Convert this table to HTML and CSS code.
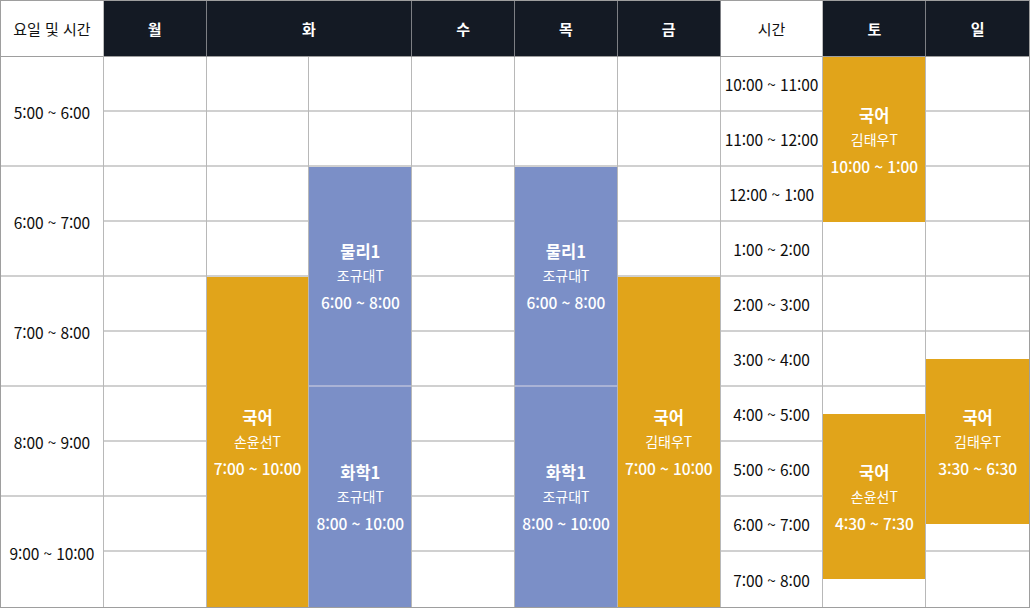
FILE: index.html
```html
<!DOCTYPE html>
<html lang="ko">
<head>
<meta charset="utf-8">
<title>시간표</title>
<link rel="stylesheet" href="styles.css">
</head>
<body>
<div class="tt">
  <div class="hd hd-light">요일 및 시간</div>
  <div class="hd">월</div>
  <div class="hd hd-wide">화</div>
  <div class="hd">수</div>
  <div class="hd">목</div>
  <div class="hd">금</div>
  <div class="hd hd-light">시간</div>
  <div class="hd">토</div>
  <div class="hd hd-last">일</div>

  <div class="col">
    <div class="slots">
      <div class="slot slot-tall">5:00 ~ 6:00</div>
      <div class="slot slot-tall">6:00 ~ 7:00</div>
      <div class="slot slot-tall">7:00 ~ 8:00</div>
      <div class="slot slot-tall">8:00 ~ 9:00</div>
      <div class="slot slot-tall">9:00 ~ 10:00</div>
    </div>
  </div>

  <div class="col">
    <div class="slots">
      <div class="slot"></div><div class="slot"></div><div class="slot"></div><div class="slot"></div><div class="slot"></div>
      <div class="slot"></div><div class="slot"></div><div class="slot"></div><div class="slot"></div><div class="slot"></div>
    </div>
  </div>

  <div class="col">
    <div class="slots">
      <div class="slot"></div><div class="slot"></div><div class="slot"></div><div class="slot"></div><div class="slot"></div>
      <div class="slot"></div><div class="slot"></div><div class="slot"></div><div class="slot"></div><div class="slot"></div>
    </div>
    <div class="events">
      <div class="ev ev-gold" style="grid-row: 9 / 21">
        <div class="ev-title">국어</div>
        <div class="ev-teacher">손윤선T</div>
        <div class="ev-time">7:00 ~ 10:00</div>
      </div>
    </div>
  </div>

  <div class="col">
    <div class="slots">
      <div class="slot"></div><div class="slot"></div><div class="slot"></div><div class="slot"></div><div class="slot"></div>
      <div class="slot"></div><div class="slot"></div><div class="slot"></div><div class="slot"></div><div class="slot"></div>
    </div>
    <div class="events">
      <div class="ev ev-blue ev-split" style="grid-row: 5 / 13">
        <div class="ev-title">물리1</div>
        <div class="ev-teacher">조규대T</div>
        <div class="ev-time">6:00 ~ 8:00</div>
      </div>
      <div class="ev ev-blue" style="grid-row: 13 / 21">
        <div class="ev-title">화학1</div>
        <div class="ev-teacher">조규대T</div>
        <div class="ev-time">8:00 ~ 10:00</div>
      </div>
    </div>
  </div>

  <div class="col">
    <div class="slots">
      <div class="slot"></div><div class="slot"></div><div class="slot"></div><div class="slot"></div><div class="slot"></div>
      <div class="slot"></div><div class="slot"></div><div class="slot"></div><div class="slot"></div><div class="slot"></div>
    </div>
  </div>

  <div class="col">
    <div class="slots">
      <div class="slot"></div><div class="slot"></div><div class="slot"></div><div class="slot"></div><div class="slot"></div>
      <div class="slot"></div><div class="slot"></div><div class="slot"></div><div class="slot"></div><div class="slot"></div>
    </div>
    <div class="events">
      <div class="ev ev-blue ev-split" style="grid-row: 5 / 13">
        <div class="ev-title">물리1</div>
        <div class="ev-teacher">조규대T</div>
        <div class="ev-time">6:00 ~ 8:00</div>
      </div>
      <div class="ev ev-blue" style="grid-row: 13 / 21">
        <div class="ev-title">화학1</div>
        <div class="ev-teacher">조규대T</div>
        <div class="ev-time">8:00 ~ 10:00</div>
      </div>
    </div>
  </div>

  <div class="col">
    <div class="slots">
      <div class="slot"></div><div class="slot"></div><div class="slot"></div><div class="slot"></div><div class="slot"></div>
      <div class="slot"></div><div class="slot"></div><div class="slot"></div><div class="slot"></div><div class="slot"></div>
    </div>
    <div class="events">
      <div class="ev ev-gold" style="grid-row: 9 / 21">
        <div class="ev-title">국어</div>
        <div class="ev-teacher">김태우T</div>
        <div class="ev-time">7:00 ~ 10:00</div>
      </div>
    </div>
  </div>

  <div class="col">
    <div class="slots">
      <div class="slot">10:00 ~ 11:00</div>
      <div class="slot">11:00 ~ 12:00</div>
      <div class="slot">12:00 ~ 1:00</div>
      <div class="slot">1:00 ~ 2:00</div>
      <div class="slot">2:00 ~ 3:00</div>
      <div class="slot">3:00 ~ 4:00</div>
      <div class="slot">4:00 ~ 5:00</div>
      <div class="slot">5:00 ~ 6:00</div>
      <div class="slot">6:00 ~ 7:00</div>
      <div class="slot">7:00 ~ 8:00</div>
    </div>
  </div>

  <div class="col">
    <div class="slots">
      <div class="slot"></div><div class="slot"></div><div class="slot"></div><div class="slot"></div><div class="slot"></div>
      <div class="slot"></div><div class="slot"></div><div class="slot"></div><div class="slot"></div><div class="slot"></div>
    </div>
    <div class="events">
      <div class="ev ev-gold" style="grid-row: 1 / 7">
        <div class="ev-title">국어</div>
        <div class="ev-teacher">김태우T</div>
        <div class="ev-time">10:00 ~ 1:00</div>
      </div>
      <div class="ev ev-gold" style="grid-row: 14 / 20">
        <div class="ev-title">국어</div>
        <div class="ev-teacher">손윤선T</div>
        <div class="ev-time">4:30 ~ 7:30</div>
      </div>
    </div>
  </div>

  <div class="col col-last">
    <div class="slots">
      <div class="slot"></div><div class="slot"></div><div class="slot"></div><div class="slot"></div><div class="slot"></div>
      <div class="slot"></div><div class="slot"></div><div class="slot"></div><div class="slot"></div><div class="slot"></div>
    </div>
    <div class="events">
      <div class="ev ev-gold" style="grid-row: 12 / 18">
        <div class="ev-title">국어</div>
        <div class="ev-teacher">김태우T</div>
        <div class="ev-time">3:30 ~ 6:30</div>
      </div>
    </div>
  </div>
</div>
</body>
</html>
```

FILE: styles.css
```css
* { box-sizing: border-box; }

html, body {
  margin: 0;
  padding: 0;
  background: #ffffff;
}

body {
  font-family: "Noto Sans CJK KR", "Noto Sans", sans-serif;
  color: #111111;
}

.tt {
  width: 1030px;
  height: 608px;
  border: 1px solid #9e9e9e;
  display: grid;
  grid-template-columns: repeat(10, 1fr);
  grid-template-rows: 56px 550px;
}

.hd {
  display: flex;
  align-items: center;
  justify-content: center;
  background: #141a24;
  color: #ffffff;
  font-size: 15px;
  font-weight: 700;
  border-right: 1px solid #7d7f84;
  border-bottom: 1px solid #9e9e9e;
}

.hd-light {
  background: #ffffff;
  color: #111111;
  font-weight: 400;
  font-size: 15px;
  border-right-color: #bdbdbd;
}

.hd-wide { grid-column: span 2; }
.hd-last { border-right: none; }

.col {
  display: grid;
  grid-template-columns: 100%;
  grid-template-rows: 100%;
  border-right: 1px solid #b8b8b8;
  min-width: 0;
}

.col-last { border-right: none; }

.slots {
  grid-area: 1 / 1;
  display: flex;
  flex-direction: column;
}

.slot {
  height: 55px;
  flex: none;
  border-bottom: 2px solid #d0d0d0;
  display: flex;
  align-items: center;
  justify-content: center;
  font-size: 15.5px;
  color: #0d0d0d;
  white-space: nowrap;
  padding-top: 1px;
  letter-spacing: -0.1px;
}

.slot-tall { height: 110px; }

.slot:last-child { border-bottom: none; }

.events {
  grid-area: 1 / 1;
  display: grid;
  grid-template-columns: 100%;
  grid-template-rows: repeat(10, 27px 28px);
}

.ev {
  display: flex;
  flex-direction: column;
  align-items: center;
  justify-content: center;
  color: #ffffff;
  text-align: center;
  white-space: nowrap;
  padding-top: 1px;
}

.ev-gold { background: #e1a41a; }
.ev-blue { background: #7b8fc7; }

.ev-split { border-bottom: 2px solid #aab3d6; }

.ev-title {
  font-size: 16.5px;
  font-weight: 700;
  line-height: 24px;
}

.ev-teacher {
  font-size: 14px;
  font-weight: 400;
  line-height: 24px;
}

.ev-time {
  font-size: 15.5px;
  font-weight: 500;
  line-height: 24px;
  margin-top: 3px;
  letter-spacing: -0.1px;
}
```
